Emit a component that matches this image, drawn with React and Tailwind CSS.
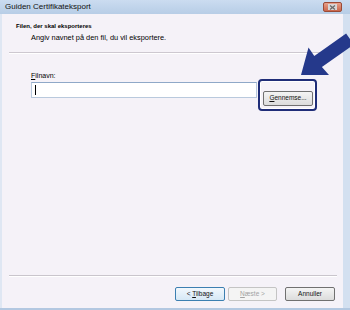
export default function App() {
  return (
    <div className="relative w-[350px] h-[310px] overflow-hidden flex flex-col bg-[#f5f2f8] font-['Liberation_Sans',Arial,sans-serif] text-black">
      {/* Title bar */}
      <div className="h-[14px] flex items-center justify-between pl-[5px] pr-[8px] bg-gradient-to-b from-[#cbdcf0] to-[#b7cde6]">
        <span className="text-[8px] leading-none text-[#111]">Guiden Certifikateksport</span>
        <div className="w-[19px] h-[10px] rounded-[2px] border border-[#9a4a36] bg-gradient-to-b from-[#e8a08a] to-[#c9664c] flex items-center justify-center">
          <div className="w-[9px] h-[6px] bg-[#d9d6d6] flex items-center justify-center">
            <svg width="7" height="5" viewBox="0 0 7 5">
              <path d="M1 0.5 L6 4.5 M6 0.5 L1 4.5" stroke="#6b6b6b" strokeWidth="1.3" />
            </svg>
          </div>
        </div>
      </div>

      <div className="flex flex-1">
        <div className="w-[2px] bg-[#dfe7f3]" />
        <div className="flex-1 flex flex-col">
          {/* Header */}
          <div className="pt-[8px] pl-[14px]">
            <div className="text-[6px] leading-[8px] font-bold">Filen, der skal eksporteres</div>
            <div className="ml-[15px] mt-[4px] text-[7.4px] leading-[8px]">Angiv navnet på den fil, du vil eksportere.</div>
          </div>
          <div className="mt-[10px] ml-[7px] mr-[3px] h-[1px] bg-[#cdc8d0] border-b border-white box-content" />

          {/* Form */}
          <div className="pl-[29px] mt-[18px]">
            <div className="text-[7px] leading-[8px]">
              <span className="underline">F</span>ilnavn:
            </div>
            <div className="flex items-start mt-[2px]">
              <div className="w-[226px] h-[16px] bg-white border border-[#b9c9dd] border-t-[#8fa8c8] flex items-center pl-[3px]">
                <div className="w-px h-[10px] bg-black" />
              </div>
              <div className="relative ml-[6px] mt-[1px]">
                <div className="absolute -left-[5px] -top-[4px] -right-[4px] -bottom-[4px] rounded-[4px] border-2 border-[#1f2d78] ring-1 ring-inset ring-white" />
                <button className="relative w-[50px] h-[15px] rounded-[2px] border border-[#707070] bg-gradient-to-b from-[#f4f4f4] to-[#dcdcdc] text-[6.5px] leading-none text-[#111]">
                  <span className="underline">G</span>ennemse...
                </button>
              </div>
            </div>
          </div>

          <div className="flex-1" />
          <div className="ml-[7px] mr-[6px] h-[1px] bg-[#c9c5cc] border-b border-white box-content" />
          <div className="flex justify-end pr-[8px] mt-[10px] mb-[7px]">
            <button className="w-[50px] h-[14px] rounded-[2px] border border-[#3c7fb1] bg-gradient-to-b from-[#f2f8fd] to-[#d6e8f6] text-[6.5px] leading-none text-[#111]">
              &lt; <span className="underline">T</span>ilbage
            </button>
            <button className="ml-[3px] w-[49px] h-[14px] rounded-[2px] border border-[#c4c4c4] bg-[#f4f4f4] text-[6.5px] leading-none text-[#a3a3a3]">
              <span className="underline">N</span>æste &gt;
            </button>
            <button className="ml-[8px] w-[50px] h-[14px] rounded-[2px] border border-[#707070] bg-gradient-to-b from-[#f4f4f4] to-[#dcdcdc] text-[6.5px] leading-none text-[#111]">
              Annuller
            </button>
          </div>
        </div>
        <div className="w-[7px] bg-[#d3e0f0]" />
      </div>
      <div className="h-[2px] bg-[#b3c8e1]" />

      {/* Arrow overlay */}
      <svg className="absolute left-0 top-0 pointer-events-none" width="350" height="310" viewBox="0 0 350 310">
        <polygon
          points="301,75 308.5,47.5 314.3,56 346.1,33.4 353.7,44.5 321.9,67.1 329,75"
          fill="#25398b"
        />
      </svg>
    </div>
  );
}
